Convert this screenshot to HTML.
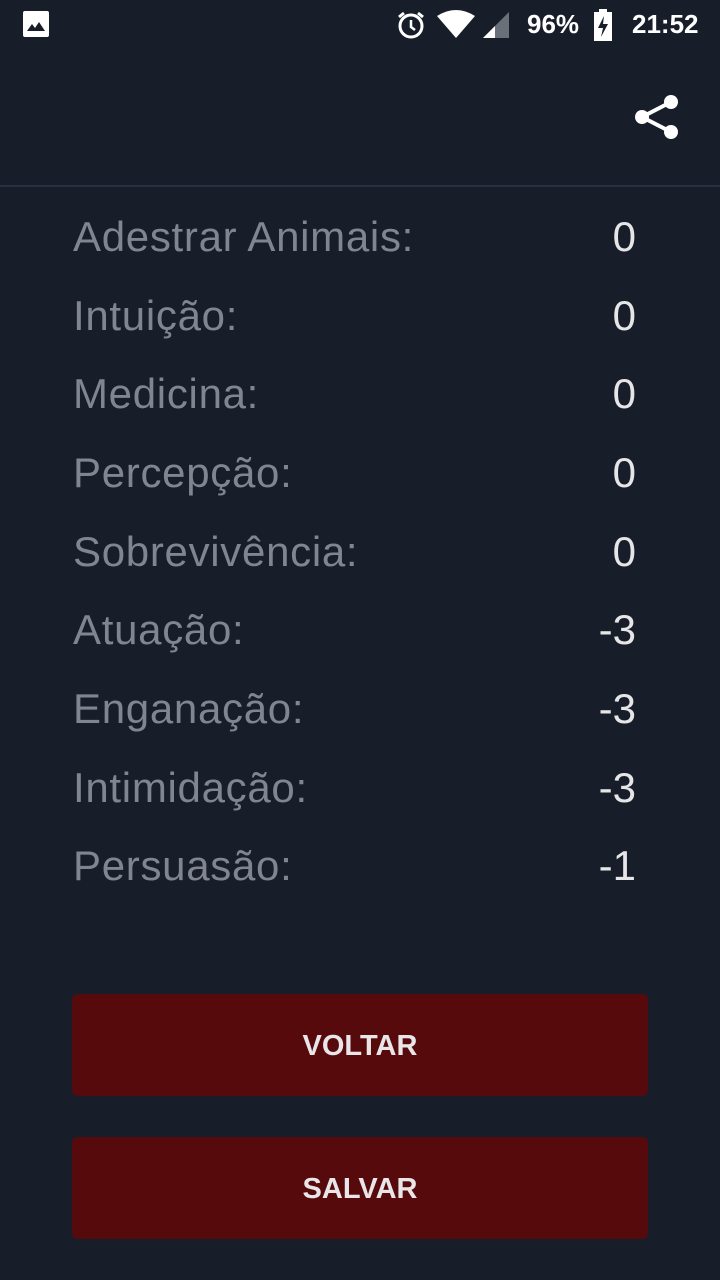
<!DOCTYPE html>
<html><head><meta charset="utf-8"><style>
body{margin:0;width:720px;height:1280px;background:#181d2a;font-family:"Liberation Sans",sans-serif;position:relative;overflow:hidden}
.sb{position:absolute;top:0;left:0;right:0;height:48px;color:#fff;font-size:27px}
.line{position:absolute;top:185px;left:0;right:0;height:2px;background:#2b3040}
.row{position:absolute;left:73px;width:563px;height:50px;font-size:42px;line-height:50px}
.row .l{color:#80858f;letter-spacing:0.7px}
.row .v{position:absolute;right:0;top:0;color:#e6e6e8}
.btn{position:absolute;left:72px;width:576px;height:102px;background:#570a0c;border-radius:6px;color:#e8e6e8;font-weight:bold;font-size:29px;text-align:center;line-height:104px}
</style></head><body>
<div class="sb">
<svg style="position:absolute;left:23px;top:11px" width="26" height="26" viewBox="0 0 26 26"><rect x="0" y="0" width="26" height="26" rx="2" fill="#fff"/><path d="M4 20 L9 13 L12 17 L16 11 L22 20Z" fill="#181d2a"/></svg>
<svg style="position:absolute;left:396px;top:10px" width="30" height="30" viewBox="0 0 30 30"><circle cx="15" cy="16" r="11" fill="none" stroke="#fff" stroke-width="3"/><path d="M15 10v7l4 3" stroke="#fff" stroke-width="2.5" fill="none"/><path d="M3 7l5-4M27 7l-5-4" stroke="#fff" stroke-width="3"/></svg>
<svg style="position:absolute;left:437px;top:10px" width="38" height="28" viewBox="0 0 38 28"><path d="M0 6 Q19 -6 38 6 L19 28Z" fill="#fff"/></svg>
<svg style="position:absolute;left:483px;top:12px" width="26" height="26" viewBox="0 0 26 26"><path d="M0 26 L26 0 V26Z" fill="#6b6f78"/><path d="M0 26 L12 14 V26Z" fill="#fff"/></svg>
<span style="position:absolute;left:527px;top:9px;font-weight:bold;font-size:26px">96%</span>
<svg style="position:absolute;left:592px;top:9px" width="22" height="32" viewBox="0 0 22 32"><rect x="7" y="0" width="8" height="4" fill="#fff"/><rect x="2" y="3" width="18" height="29" fill="#fff"/><path d="M12 7 L6 19 H11 L9 28 L16 15 H11Z" fill="#181d2a"/></svg>
<span style="position:absolute;left:632px;top:9px;font-weight:bold;font-size:26px">21:52</span>
</div>
<svg style="position:absolute;left:632px;top:92px" width="48" height="50" viewBox="0 0 48 50"><circle cx="39" cy="10" r="7" fill="#fff"/><circle cx="10" cy="25" r="7" fill="#fff"/><circle cx="39" cy="40" r="7" fill="#fff"/><path d="M39 10 L10 25 L39 40" stroke="#fff" stroke-width="4" fill="none"/></svg>
<div class="line"></div>
<div class="row" style="top:212px"><span class="l">Adestrar Animais:</span><span class="v">0</span></div>
<div class="row" style="top:291px"><span class="l">Intuição:</span><span class="v">0</span></div>
<div class="row" style="top:369px"><span class="l">Medicina:</span><span class="v">0</span></div>
<div class="row" style="top:448px"><span class="l">Percepção:</span><span class="v">0</span></div>
<div class="row" style="top:527px"><span class="l">Sobrevivência:</span><span class="v">0</span></div>
<div class="row" style="top:605px"><span class="l">Atuação:</span><span class="v">-3</span></div>
<div class="row" style="top:684px"><span class="l">Enganação:</span><span class="v">-3</span></div>
<div class="row" style="top:763px"><span class="l">Intimidação:</span><span class="v">-3</span></div>
<div class="row" style="top:841px"><span class="l">Persuasão:</span><span class="v">-1</span></div>
<div class="btn" style="top:994px">VOLTAR</div>
<div class="btn" style="top:1137px">SALVAR</div>
</body></html>
